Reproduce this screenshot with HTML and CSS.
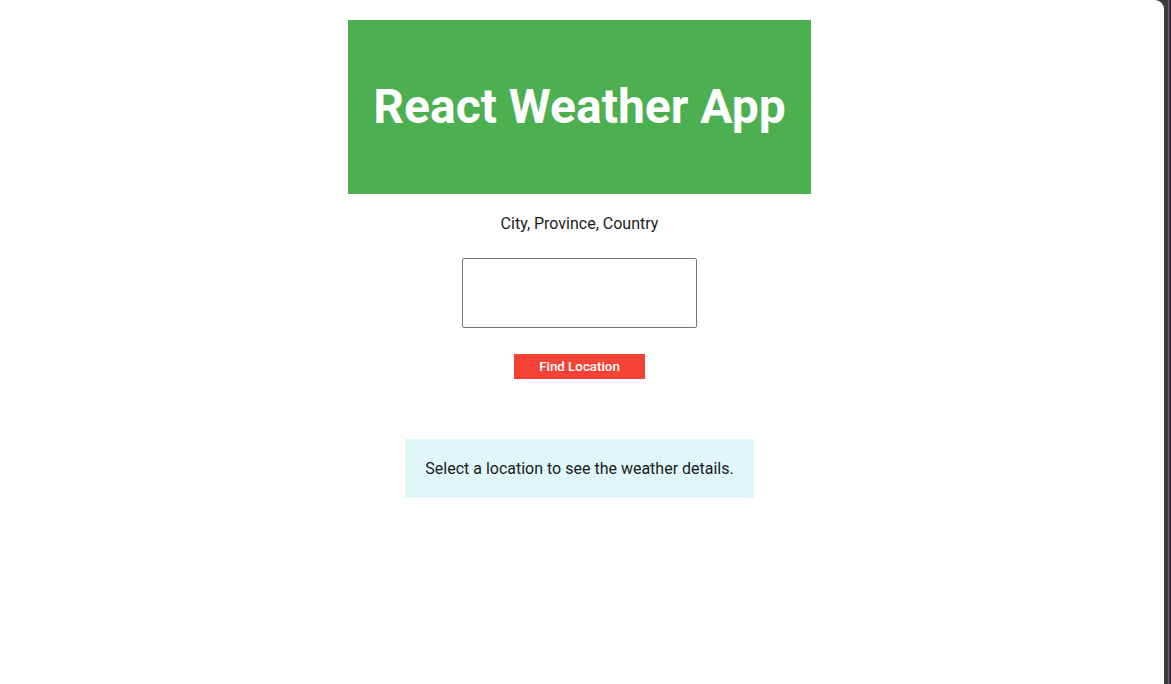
FILE: index.html
```html
<!DOCTYPE html>
<html lang="en">
<head>
<meta charset="utf-8">
<title>React Weather App</title>
<link rel="stylesheet" href="styles.css">
</head>
<body>
<div class="frame">
  <div class="page">
    <div class="app">
      <header class="header">
        <h1 class="title">React Weather App</h1>
      </header>
      <form class="search">
        <label class="search-label" for="loc">City, Province, Country</label>
        <input class="search-input" id="loc" type="text">
        <button class="search-button" type="button">Find Location</button>
      </form>
      <div class="info">Select a location to see the weather details.</div>
    </div>
  </div>
  <div class="edge"></div>
</div>
</body>
</html>
```
FILE: styles.css
```css
html, body {
  margin: 0;
  padding: 0;
  height: 100%;
}
body {
  background: #3c3c3c;
  font-family: Roboto, "Liberation Sans", sans-serif;
  color: #212121;
}
.frame {
  display: flex;
  height: 684px;
}
.page {
  width: 1164px;
  height: 684px;
  background: #ffffff;
  border-top-right-radius: 9px;
}
.edge {
  width: 7px;
  background: linear-gradient(to right, #3c3c3c 0 4px, #6a6a6a 4px 5px, #3c3c3c 5px 6px, #3a1a30 6px 7px);
}
.app {
  width: 1159px;
  display: flex;
  flex-direction: column;
  align-items: center;
  padding-top: 20px;
}
.header {
  width: 463px;
  height: 174px;
  background: #4caf50;
  display: flex;
  align-items: center;
  justify-content: center;
}
.title {
  margin: 0;
  color: #ffffff;
  font-size: 48px;
  font-weight: 700;
  line-height: 1;
}
.search {
  display: flex;
  flex-direction: column;
  align-items: center;
}
.search-label {
  margin-top: 20px;
  font-size: 16px;
  line-height: 19px;
  color: #1a1a1a;
}
.search-input {
  margin-top: 25px;
  width: 235px;
  height: 70px;
  box-sizing: border-box;
  border: 1px solid #767676;
  border-radius: 2px;
  padding: 0 4px;
  font-size: 16px;
}
.search-button {
  margin-top: 26px;
  width: 131px;
  height: 25px;
  border: none;
  background: #f44336;
  color: #ffffff;
  font-family: Roboto, "Liberation Sans", sans-serif;
  font-size: 13.333px;
  font-weight: 500;
  padding: 0;
}
.info {
  margin-top: 60px;
  width: 349px;
  height: 59px;
  box-sizing: border-box;
  background: #e0f7fa;
  display: flex;
  align-items: center;
  justify-content: center;
  font-size: 16px;
  color: #1a1a1a;
}
```
